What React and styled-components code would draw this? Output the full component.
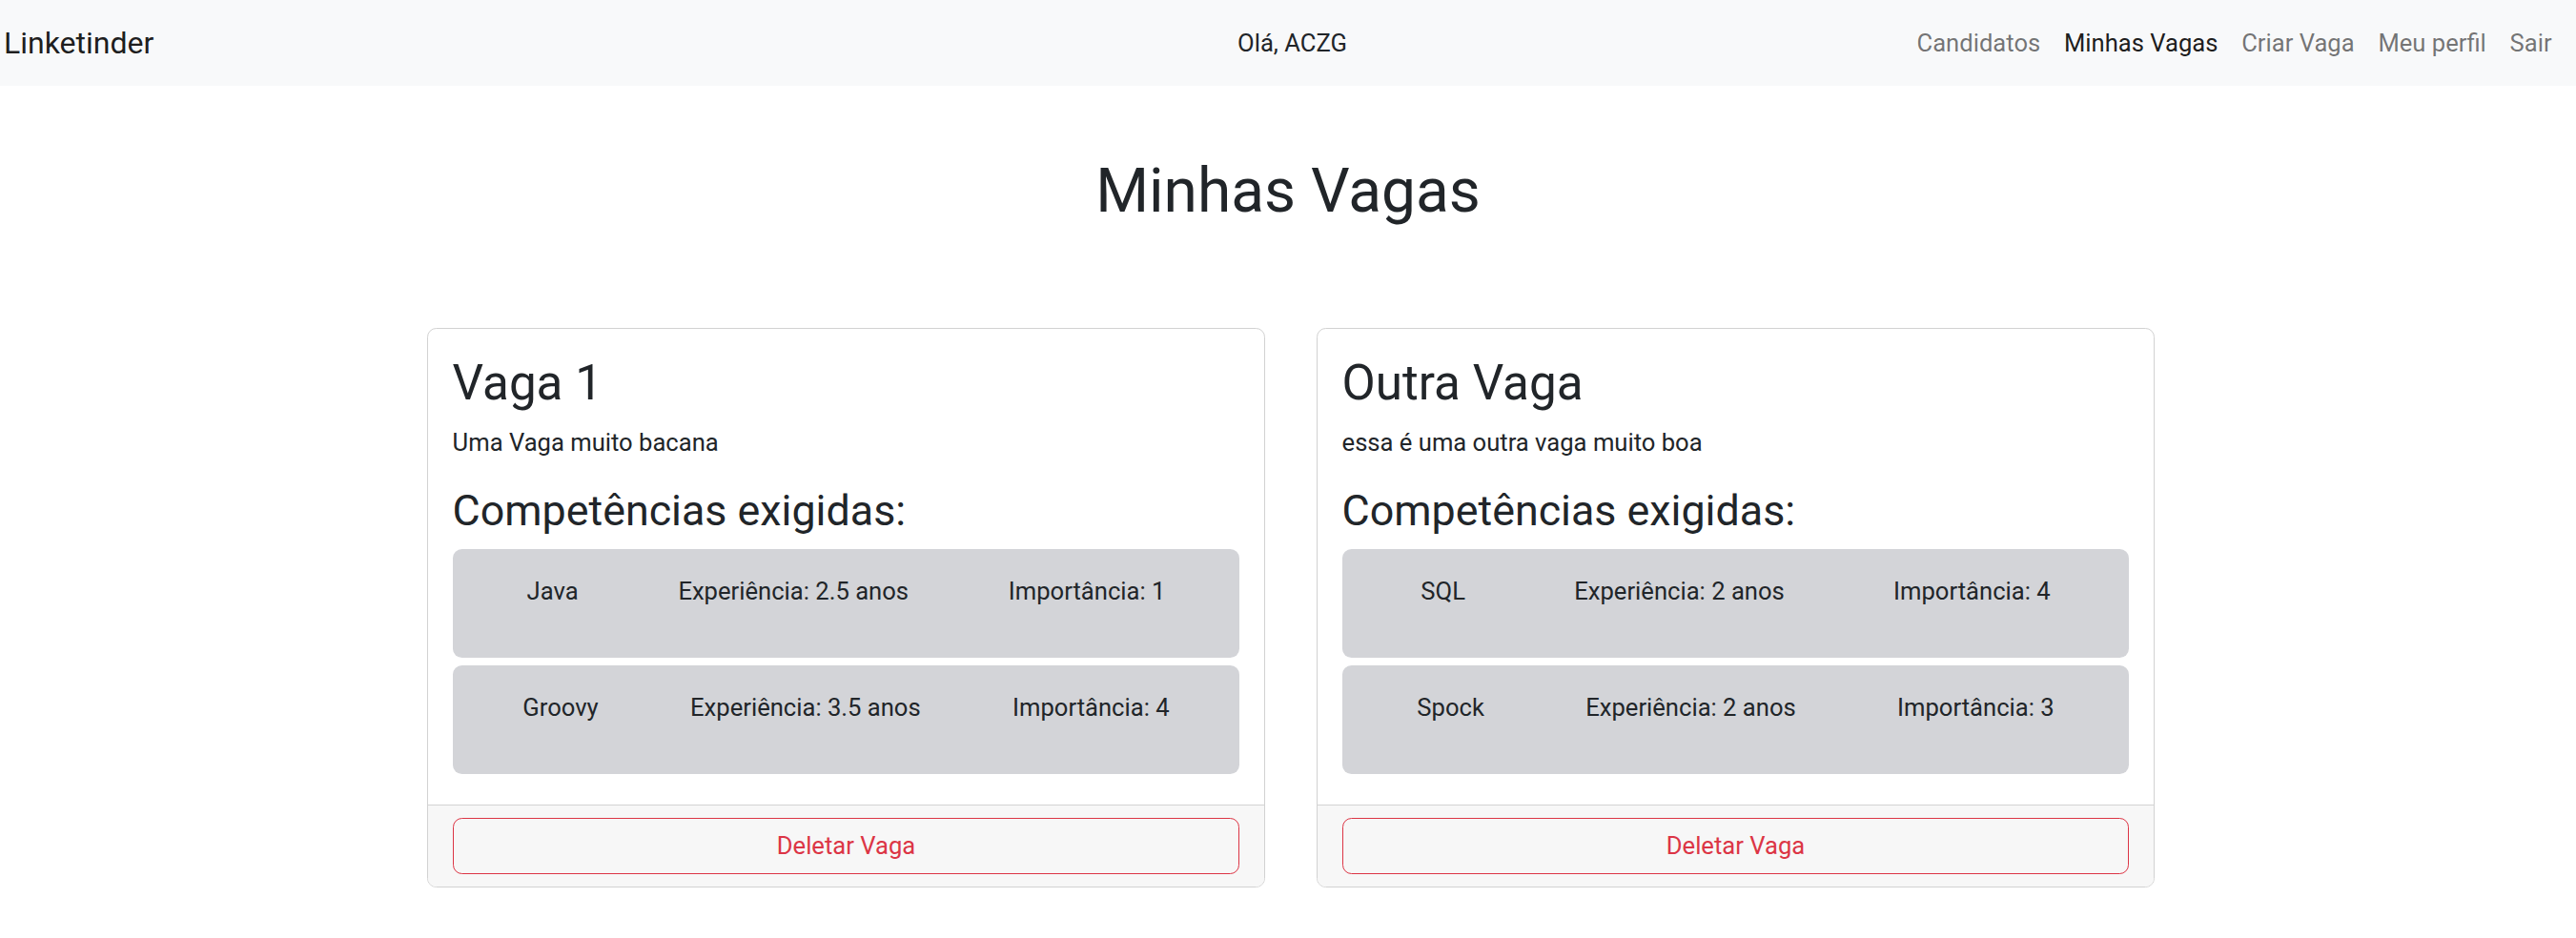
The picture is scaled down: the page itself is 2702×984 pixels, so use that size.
import styled, { createGlobalStyle } from 'styled-components';

const GlobalStyle = createGlobalStyle`
    * {
        box-sizing: border-box;
    }
    body {
        margin: 0;
        background: #ffffff;
        color: #212529;
        font-family: Roboto, "Liberation Sans", sans-serif;
        font-size: 25.6px;
        line-height: 1.5;
    }
`

const Navbar = styled.nav`
    display: grid;
    grid-template-columns: 1fr auto 1fr;
    align-items: center;
    height: 89.6px;
    padding: 0 13px 0 4px;
    background-color: #f8f9fa;
`

const Brand = styled.a`
    justify-self: start;
    padding: 8px 0;
    font-size: 32px;
    line-height: 48px;
    color: rgba(0, 0, 0, 0.9);
    text-decoration: none;
`

const Greeting = styled.span`
    margin-left: 18px;
    color: #212529;
    line-height: 38.4px;
`

const NavLinks = styled.ul`
    justify-self: end;
    display: flex;
    margin: 0;
    padding: 0;
    list-style: none;
`

const NavLink = styled.a`
    display: block;
    padding: 12.8px 12.4px;
    line-height: 38.4px;
    color: ${props => props.$active ? 'rgba(0, 0, 0, 0.9)' : 'rgba(0, 0, 0, 0.55)'};
    text-decoration: none;
`

const PageTitle = styled.h1`
    margin: 73px 0 0;
    text-align: center;
    font-size: 64px;
    font-weight: 400;
    line-height: 1.2;
`

const CardRow = styled.div`
    display: flex;
    justify-content: center;
    gap: 54px;
    margin-top: 105px;
    padding-left: 6px;
`

const Card = styled.div`
    display: flex;
    flex-direction: column;
    width: 879px;
    border: 1px solid #d2d2d2;
    border-radius: 9.6px;
    overflow: hidden;
`

const CardBody = styled.div`
    padding: 25.6px 25.6px 24px;
`

const CardTitle = styled.h2`
    margin: 0 0 12.8px;
    font-size: 51.2px;
    font-weight: 400;
    line-height: 1.2;
`

const Description = styled.p`
    margin: 0 0 25.6px;
`

const SkillsTitle = styled.h3`
    margin: 0 0 12.8px;
    font-size: 44.8px;
    font-weight: 400;
    line-height: 1.2;
`

const SkillBox = styled.div`
    display: flex;
    justify-content: space-around;
    align-items: flex-start;
    height: 114px;
    margin-bottom: 8px;
    padding: 25.6px;
    border-radius: 9.6px;
    background-color: #d3d4d8;
`

const CardFooter = styled.div`
    padding: 12.8px 25.6px;
    border-top: 1px solid #d2d2d2;
    background-color: #f7f7f7;
`

const DeleteButton = styled.button`
    display: block;
    width: 100%;
    padding: 9.6px 19.2px;
    border: 1px solid #dc3545;
    border-radius: 9.6px;
    background: transparent;
    color: #dc3545;
    font-family: inherit;
    font-size: 25.6px;
    line-height: 1.5;
    cursor: pointer;
`

const vagas = [
    {
        nome: 'Vaga 1',
        descricao: 'Uma Vaga muito bacana',
        competencias: [
            { nome: 'Java', experiencia: '2.5', importancia: 1 },
            { nome: 'Groovy', experiencia: '3.5', importancia: 4 },
        ],
    },
    {
        nome: 'Outra Vaga',
        descricao: 'essa é uma outra vaga muito boa',
        competencias: [
            { nome: 'SQL', experiencia: '2', importancia: 4 },
            { nome: 'Spock', experiencia: '2', importancia: 3 },
        ],
    },
]

const links = ['Candidatos', 'Minhas Vagas', 'Criar Vaga', 'Meu perfil', 'Sair']

const App = () => {
    return (
        <>
            <GlobalStyle />
            <Navbar>
                <Brand href="#">Linketinder</Brand>
                <Greeting>Olá, ACZG</Greeting>
                <NavLinks>
                    {links.map(link => (
                        <li key={link}>
                            <NavLink href="#" $active={link === 'Minhas Vagas'}>{link}</NavLink>
                        </li>
                    ))}
                </NavLinks>
            </Navbar>

            <PageTitle>Minhas Vagas</PageTitle>

            <CardRow>
                {vagas.map(vaga => (
                    <Card key={vaga.nome}>
                        <CardBody>
                            <CardTitle>{vaga.nome}</CardTitle>
                            <Description>{vaga.descricao}</Description>
                            <SkillsTitle>Competências exigidas:</SkillsTitle>
                            {vaga.competencias.map(c => (
                                <SkillBox key={c.nome}>
                                    <span>{c.nome}</span>
                                    <span>Experiência: {c.experiencia} anos</span>
                                    <span>Importância: {c.importancia}</span>
                                </SkillBox>
                            ))}
                        </CardBody>
                        <CardFooter>
                            <DeleteButton>Deletar Vaga</DeleteButton>
                        </CardFooter>
                    </Card>
                ))}
            </CardRow>
        </>
    )
}

export default App;
